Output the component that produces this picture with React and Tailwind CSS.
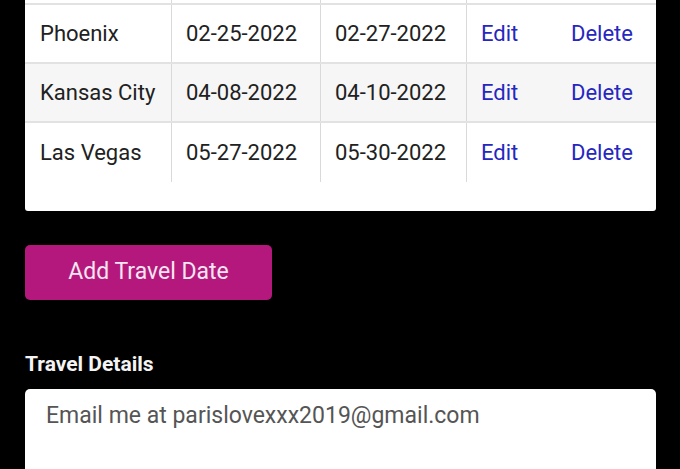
const trips = [
  { city: 'Phoenix', from: '02-25-2022', to: '02-27-2022' },
  { city: 'Kansas City', from: '04-08-2022', to: '04-10-2022' },
  { city: 'Las Vegas', from: '05-27-2022', to: '05-30-2022' },
];

export default function App() {
  return (
    <div className="min-h-screen overflow-hidden bg-black pl-[25px] pr-[24px] font-['Roboto',sans-serif]">
      <div className="rounded-b-[3px] bg-white pb-[29px]">
        {/* tail of the row scrolled above the top */}
        <div className="grid h-[5px] grid-cols-[147px_149px_146px_89px_1fr] border-b-2 border-[#e2e2e2]">
          <div className="border-r border-[#d9d9d9]" />
          <div className="border-r border-[#d9d9d9]" />
          <div className="border-r border-[#d9d9d9]" />
        </div>
        {trips.map((trip, i) => (
          <div
            key={trip.city}
            className={`grid h-[59px] grid-cols-[147px_149px_146px_89px_1fr] text-[22px] leading-[28px] text-[#212121] ${
              i < trips.length - 1 ? 'border-b-2 border-[#e2e2e2]' : ''
            } ${i === 1 ? 'bg-[#f6f6f6]' : ''}`}
          >
            <div className="flex items-center border-r border-[#d9d9d9] pl-[15px]">{trip.city}</div>
            <div className="flex items-center border-r border-[#d9d9d9] pl-[14px]">{trip.from}</div>
            <div className="flex items-center border-r border-[#d9d9d9] pl-[14px]">{trip.to}</div>
            <div className="flex items-center pl-[14px] text-[#2626c0]">Edit</div>
            <div className="flex items-center pl-[15px] text-[#2626c0]">Delete</div>
          </div>
        ))}
      </div>

      <button
        type="button"
        className="mt-[34px] h-[55px] w-[247px] rounded-[5px] bg-[#b5187c] text-[23px] text-[#f6e6f1]"
      >
        Add Travel Date
      </button>

      <div className="mt-[52px] text-[21px] font-bold leading-[24px] text-[#f4f4f4]">Travel Details</div>

      <div className="mt-[13px] h-[140px] rounded-[5px] bg-white pl-[21px] pt-[13px] text-[23px] leading-[28px] text-[#555]">
        Email me at parislovexxx2019@gmail.com
      </div>
    </div>
  );
}
